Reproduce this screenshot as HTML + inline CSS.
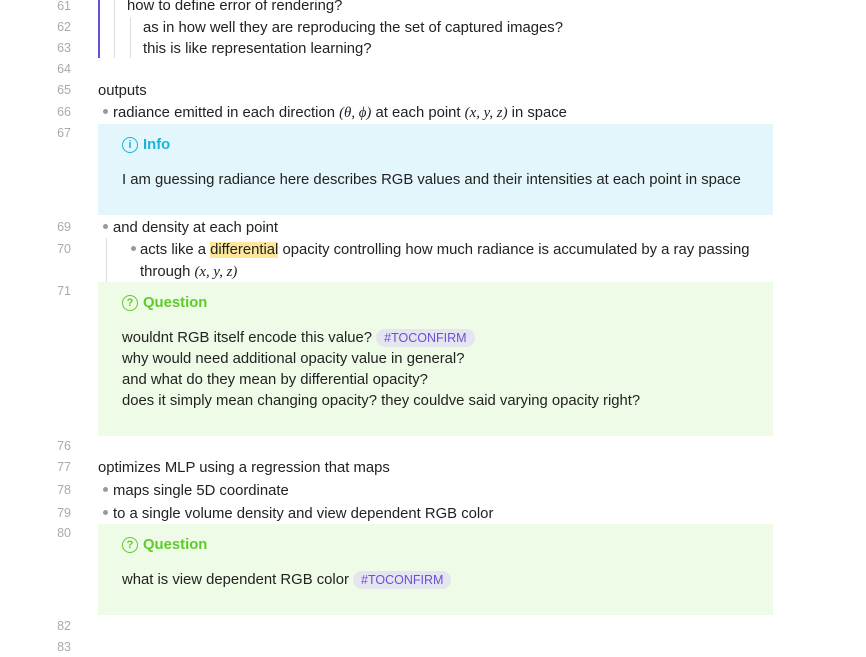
<!DOCTYPE html>
<html><head><meta charset="utf-8"><style>
body{margin:0;width:866px;height:657px;background:#fff;position:relative;overflow:hidden;font-family:"Liberation Sans",sans-serif;color:#222;font-size:14.85px}
.n{position:absolute;left:30px;width:41px;text-align:right;color:#aaa;font-size:12.5px;line-height:16px}
.t{position:absolute;line-height:20px;white-space:nowrap}
.b{position:absolute;width:5px;height:5px;border-radius:50%;background:#999}
.box{position:absolute;left:98px;width:675px}
.m{font-family:"Liberation Serif",serif;font-style:italic}
.tag{background:#e5e5ef;color:#6a4fd8;border-radius:10px;padding:2px 8px;font-size:12.5px}
.h{position:absolute;left:122px;font-weight:bold;font-size:14.85px;line-height:20px;display:flex;align-items:center}
.ic{display:inline-block;width:14px;height:14px;border:1.5px solid;border-radius:50%;text-align:center;font-size:11px;line-height:14px;margin-right:5px;box-sizing:content-box}
</style></head><body>
<div style="position:absolute;left:98px;top:0;width:2px;height:58px;background:#6a4fd8"></div>
<div style="position:absolute;left:114px;top:0;width:1px;height:58px;background:#ddd"></div>
<div style="position:absolute;left:130px;top:17px;width:1px;height:41px;background:#ddd"></div>
<div style="position:absolute;left:106px;top:238px;width:1px;height:44px;background:#ddd"></div>

<div class="n" style="top:-2px">61</div><div class="t" style="left:127px;top:-4px">how to define error of rendering?</div>
<div class="n" style="top:19px">62</div><div class="t" style="left:143px;top:18px">as in how well they are reproducing the set of captured images?</div>
<div class="n" style="top:40px">63</div><div class="t" style="left:143px;top:39px">this is like representation learning?</div>
<div class="n" style="top:61px">64</div>
<div class="n" style="top:82px">65</div><div class="t" style="left:98px;top:81px">outputs</div>
<div class="n" style="top:104px">66</div><div class="b" style="left:103px;top:109px"></div><div class="t" style="left:113px;top:103px">radiance emitted in each direction <span class="m">(θ, ϕ)</span> at each point <span class="m">(x, y, z)</span> in space</div>
<div class="n" style="top:125px">67</div>
<div class="box" style="top:124px;height:91px;background:#e2f6fb"></div>
<div class="h" style="top:135px;color:#1bb3d6"><span class="ic">i</span>Info</div>
<div class="t" style="left:122px;top:170px">I am guessing radiance here describes RGB values and their intensities at each point in space</div>

<div class="n" style="top:219px">69</div><div class="b" style="left:103px;top:224px"></div><div class="t" style="left:113px;top:218px">and density at each point</div>
<div class="n" style="top:241px">70</div><div class="b" style="left:131px;top:246px"></div><div class="t" style="left:140px;top:240px">acts like a <span style="background:#fde79a">differential</span> opacity controlling how much radiance is accumulated by a ray passing</div>
<div class="t" style="left:140px;top:262px">through <span class="m">(x, y, z)</span></div>
<div class="n" style="top:283px">71</div>
<div class="box" style="top:282px;height:154px;background:#eefbe6"></div>
<div class="h" style="top:293px;color:#5ecb2a"><span class="ic">?</span>Question</div>
<div class="t" style="left:122px;top:328px">wouldnt RGB itself encode this value? <span class="tag">#TOCONFIRM</span></div>
<div class="t" style="left:122px;top:349px">why would need additional opacity value in general?</div>
<div class="t" style="left:122px;top:370px">and what do they mean by differential opacity?</div>
<div class="t" style="left:122px;top:391px">does it simply mean changing opacity? they couldve said varying opacity right?</div>

<div class="n" style="top:438px">76</div>
<div class="n" style="top:459px">77</div><div class="t" style="left:98px;top:458px">optimizes MLP using a regression that maps</div>
<div class="n" style="top:482px">78</div><div class="b" style="left:103px;top:487px"></div><div class="t" style="left:113px;top:481px">maps single 5D coordinate</div>
<div class="n" style="top:505px">79</div><div class="b" style="left:103px;top:510px"></div><div class="t" style="left:113px;top:504px">to a single volume density and view dependent RGB color</div>
<div class="n" style="top:525px">80</div>
<div class="box" style="top:524px;height:91px;background:#eefbe6"></div>
<div class="h" style="top:535px;color:#5ecb2a"><span class="ic">?</span>Question</div>
<div class="t" style="left:122px;top:570px">what is view dependent RGB color <span class="tag">#TOCONFIRM</span></div>
<div class="n" style="top:618px">82</div>
<div class="n" style="top:639px">83</div>
</body></html>
